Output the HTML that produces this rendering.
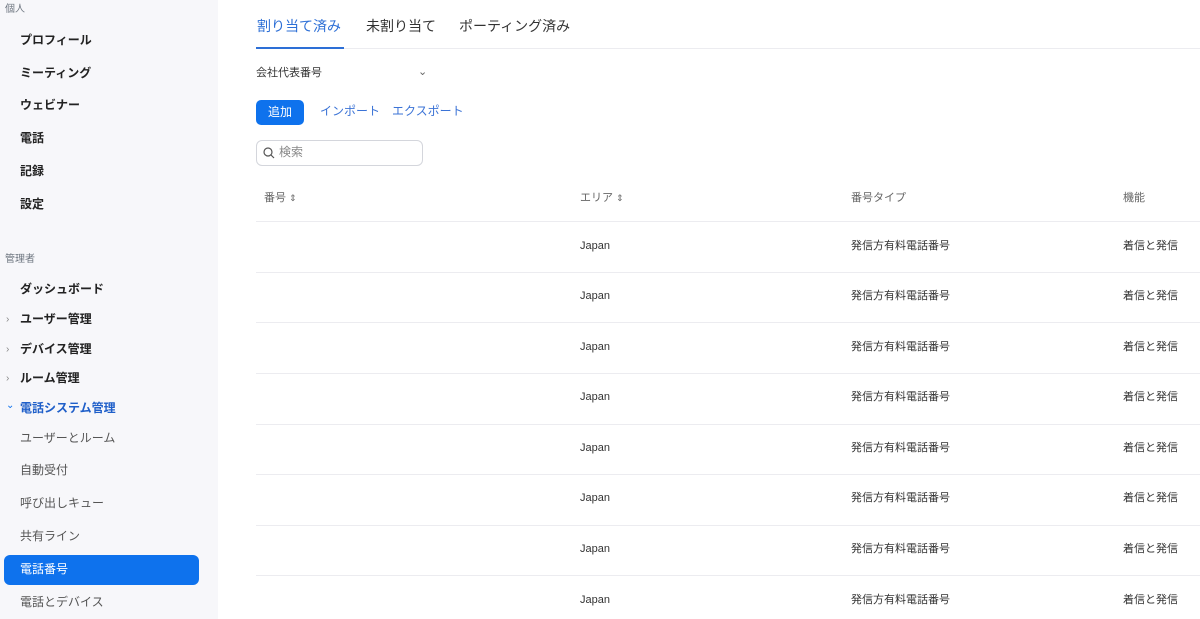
<!DOCTYPE html>
<html><head><meta charset="utf-8"><style>
*{margin:0;padding:0;box-sizing:border-box}
body{width:1200px;height:619px;overflow:hidden;background:#fff;font-family:"Liberation Sans","Noto Sans CJK JP",sans-serif;position:relative}
.sb{position:absolute;left:0;top:0;width:218px;height:619px;background:#f7f7fa}
.t{position:absolute;white-space:nowrap;line-height:16px}
.sec{font-size:10px;color:#6e7680;left:5px}
.it{font-size:12px;color:#222;font-weight:bold;left:20px}
.sub{font-size:12px;color:#555;left:20px}
.ar{position:absolute;left:6px;font-size:10px;color:#888;line-height:16px}
.hl{position:absolute;left:4px;top:555px;width:195px;height:30px;background:#0e72ed;border-radius:6px}
.main{font-size:11px;color:#333}
.line{position:absolute;left:256px;right:0;height:1px;background:#ececf0}
</style></head><body>
<div class="sb"></div>
<div class="t sec" style="top:2px">個人</div>
<div class="t it" style="top:32px">プロフィール</div>
<div class="t it" style="top:65px">ミーティング</div>
<div class="t it" style="top:97px">ウェビナー</div>
<div class="t it" style="top:130px">電話</div>
<div class="t it" style="top:163px">記録</div>
<div class="t it" style="top:196px">設定</div>
<div class="t sec" style="top:252px">管理者</div>
<div class="t it" style="top:281px">ダッシュボード</div>
<div class="ar" style="top:312px">›</div><div class="t it" style="top:311px">ユーザー管理</div>
<div class="ar" style="top:342px">›</div><div class="t it" style="top:341px">デバイス管理</div>
<div class="ar" style="top:371px">›</div><div class="t it" style="top:370px">ルーム管理</div>
<div class="ar" style="top:398px;color:#0e72ed">⌄</div><div class="t it" style="top:400px;color:#1f5fc9">電話システム管理</div>
<div class="t sub" style="top:430px">ユーザーとルーム</div>
<div class="t sub" style="top:462px">自動受付</div>
<div class="t sub" style="top:495px">呼び出しキュー</div>
<div class="t sub" style="top:528px">共有ライン</div>
<div class="hl"></div>
<div class="t sub" style="top:561px;color:#fff">電話番号</div>
<div class="t sub" style="top:594px">電話とデバイス</div>

<div class="t" style="left:257px;top:17px;font-size:14px;line-height:18px;color:#2d6fd6">割り当て済み</div>
<div class="t" style="left:366px;top:17px;font-size:14px;line-height:18px;color:#333">未割り当て</div>
<div class="t" style="left:459px;top:17px;font-size:14px;line-height:18px;color:#333">ポーティング済み</div>
<div style="position:absolute;left:256px;top:48px;right:0;height:1px;background:#ececf0"></div>
<div style="position:absolute;left:256px;top:47px;width:88px;height:2px;background:#2d6fd6"></div>
<div class="t main" style="left:256px;top:65px">会社代表番号</div>
<div class="t" style="left:418px;top:64px;font-size:11px;color:#666">⌄</div>
<div style="position:absolute;left:256px;top:100px;width:48px;height:25px;background:#0e72ed;border-radius:5px;color:#fff;font-size:12px;text-align:center;line-height:25px">追加</div>
<div class="t" style="left:320px;top:103px;font-size:12px;color:#3b73d6">インポート</div>
<div class="t" style="left:392px;top:103px;font-size:12px;color:#3b73d6">エクスポート</div>
<div style="position:absolute;left:256px;top:140px;width:167px;height:26px;border:1px solid #d4d6dc;border-radius:6px"></div>
<svg style="position:absolute;left:263px;top:147px" width="12" height="12" viewBox="0 0 12 12"><circle cx="5" cy="5" r="4" fill="none" stroke="#555" stroke-width="1.2"/><path d="M8 8l3 3" stroke="#555" stroke-width="1.2"/></svg>
<div class="t" style="left:279px;top:144px;font-size:12px;color:#888">検索</div>
<div class="t main" style="left:264px;top:190px;color:#666">番号 <span style="font-size:9px">⇕</span></div>
<div class="t main" style="left:580px;top:190px;color:#666">エリア <span style="font-size:9px">⇕</span></div>
<div class="t main" style="left:851px;top:190px;color:#666">番号タイプ</div>
<div class="t main" style="left:1123px;top:190px;color:#666">機能</div>
<div class="line" style="top:221px"></div>
<div class="line" style="top:272px"></div>
<div class="line" style="top:322px"></div>
<div class="line" style="top:373px"></div>
<div class="line" style="top:424px"></div>
<div class="line" style="top:474px"></div>
<div class="line" style="top:525px"></div>
<div class="line" style="top:575px"></div>
<div class="t main" style="left:580px;top:238px">Japan</div><div class="t main" style="left:851px;top:238px">発信方有料電話番号</div><div class="t main" style="left:1123px;top:238px">着信と発信</div>
<div class="t main" style="left:580px;top:288px">Japan</div><div class="t main" style="left:851px;top:288px">発信方有料電話番号</div><div class="t main" style="left:1123px;top:288px">着信と発信</div>
<div class="t main" style="left:580px;top:339px">Japan</div><div class="t main" style="left:851px;top:339px">発信方有料電話番号</div><div class="t main" style="left:1123px;top:339px">着信と発信</div>
<div class="t main" style="left:580px;top:389px">Japan</div><div class="t main" style="left:851px;top:389px">発信方有料電話番号</div><div class="t main" style="left:1123px;top:389px">着信と発信</div>
<div class="t main" style="left:580px;top:440px">Japan</div><div class="t main" style="left:851px;top:440px">発信方有料電話番号</div><div class="t main" style="left:1123px;top:440px">着信と発信</div>
<div class="t main" style="left:580px;top:490px">Japan</div><div class="t main" style="left:851px;top:490px">発信方有料電話番号</div><div class="t main" style="left:1123px;top:490px">着信と発信</div>
<div class="t main" style="left:580px;top:541px">Japan</div><div class="t main" style="left:851px;top:541px">発信方有料電話番号</div><div class="t main" style="left:1123px;top:541px">着信と発信</div>
<div class="t main" style="left:580px;top:592px">Japan</div><div class="t main" style="left:851px;top:592px">発信方有料電話番号</div><div class="t main" style="left:1123px;top:592px">着信と発信</div>
</body></html>
